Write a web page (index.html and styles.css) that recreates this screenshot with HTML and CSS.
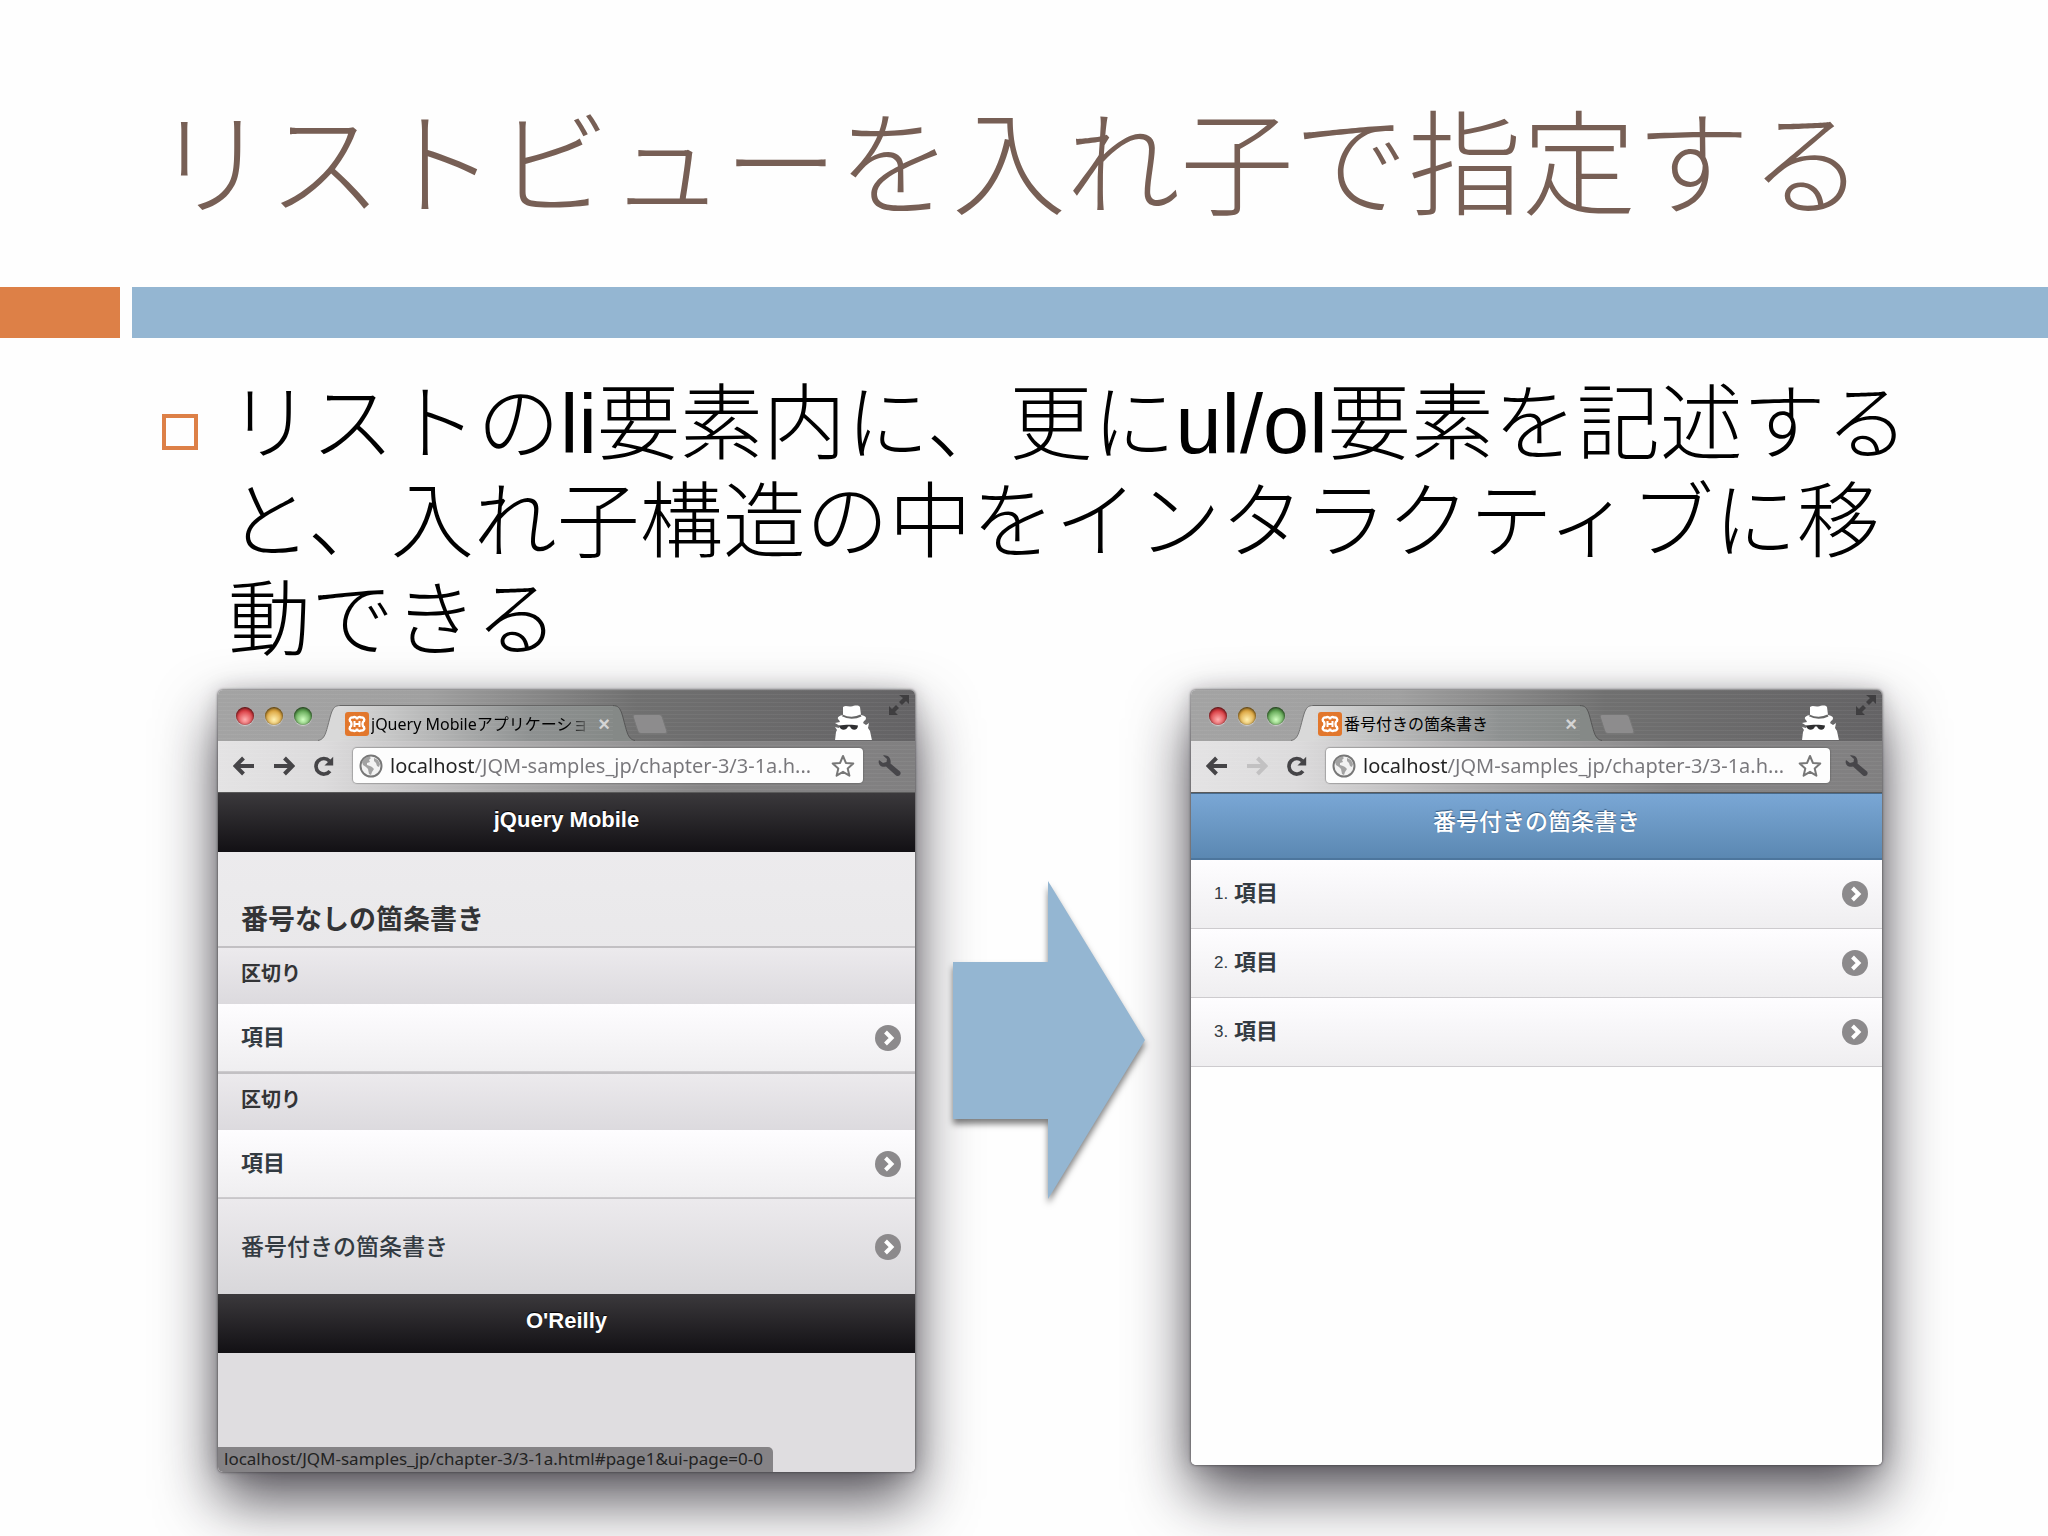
FILE: index.html
```html
<!DOCTYPE html>
<html lang="ja">
<head>
<meta charset="utf-8">
<meta name="viewport" content="width=device-width, initial-scale=1">
<title>リストビューを入れ子で指定する</title>
<link rel="stylesheet" href="styles.css">
</head>
<body>
<svg class="sprite" aria-hidden="true">
  <symbol id="chevron" viewBox="0 0 26 26"><circle cx="13" cy="13" r="13" fill="#8c8a8c"/><path d="M10.500 7l6 6-6 6" fill="none" stroke="#fff" stroke-width="4"/></symbol>
  <symbol id="arrow" viewBox="0 0 22 20"><path d="M2 10h19M10.500 2L2.500 10l8 8" fill="none" stroke="currentColor" stroke-width="4"/></symbol>
  <symbol id="reload" viewBox="0 0 24 24"><path d="M18.500 17.500A8.500 8.500 0 1 1 18 6.500" fill="none" stroke="currentColor" stroke-width="4"/><path d="M22 2v9.500h-9.500z" fill="currentColor"/></symbol>
  <symbol id="globe" viewBox="0 0 24 24"><circle cx="12" cy="12" r="10.500" fill="#f2f2f2" stroke="#777" stroke-width="2"/><path d="M3 8c1-3 4-5 7-5.500l2 1.500-2 2 1 2-3 1v2l3 1 2 1 2 2-2 3-1 3-2-1-1-5-2-2-3-2zM15 4l4 2 2 4-1 3-2-1-1-3-2-2z" fill="#a2a2a2"/></symbol>
  <symbol id="star" viewBox="0 0 24 24"><path d="M12 2l2.900 6.900 7.400.6-5.600 4.900 1.700 7.300L12 17.800l-6.400 3.900 1.700-7.300L1.700 9.500l7.400-.6z" fill="#fff" stroke="#777" stroke-width="2" stroke-linejoin="round"/></symbol>
  <symbol id="wrench" viewBox="0 0 26 24"><path d="M6 1.500l4 3.500-.5 3-3.500 1L2 6C.5 10 4 14 9 12.500l10 9c3 2 6-1.500 4-4l-9.500-8C14.500 4.500 11 .5 6 1.500z" fill="#47464a"/></symbol>
  <symbol id="favicon" viewBox="0 0 24 24"><rect width="24" height="24" rx="3" fill="#e2772c"/><path d="M8 5.500a2.500 2.500 0 0 1 4 2 2.500 2.500 0 0 1 4-2 2.500 2.500 0 0 1 3 3.500c-2 1-2 5 0 6a2.500 2.500 0 0 1-3 3.500 2.500 2.500 0 0 1-4-2 2.500 2.500 0 0 1-4 2A2.500 2.500 0 0 1 5 15c2-1 2-5 0-6a2.500 2.500 0 0 1 3-3.500z" fill="none" stroke="#fff" stroke-width="2.400"/><path d="M9.500 12h5M9.500 9v6M14.500 9v6" stroke="#fff" stroke-width="2"/></symbol>
  <symbol id="spy" viewBox="0 0 38 35"><path d="M9 2c3-2 5 0 8-.5S24-.5 26 2l1 8c3 .5 5 1.500 5 3s-1 2.500-2 3l-1 2 3 2 3-2-1 5 2 3 2 9.500H1L2 27l1-2-2-3 4 1 1-2-5-3 5-1-1-2c-2-1-2-4 4-5z" fill="#fff"/><path d="M8.500 10.500c5 3 13 3 18.500 0" fill="none" stroke="#666" stroke-width="2"/><path d="M5 20.500c6-1 15-1 19 0 0 5-6 6-8 1h-2c-2 5-8 4-9-1z" fill="#2f2f31"/></symbol>
  <symbol id="expand" viewBox="0 0 22 22"><path d="M11 1h10v9l-3-3-4 4-3-3 4-4zM1 12l3 3 4-4 3 3-4 4 3 3H1z" fill="#3f3e40"/></symbol>
  <symbol id="cap-left" viewBox="0 0 22 36"><path d="M0 36C8 34 8 26 13 9 15 3 17 .5 22 .5V36z" fill="#d9d9d9"/><path d="M0 35.500C8 34 8 26 13 9 15 3 17 .5 22 .5" fill="none" stroke="#747474"/></symbol>
  <symbol id="cap-right" viewBox="0 0 22 36"><path d="M22 36C14 34 14 26 9 9 7 3 5 .5 0 .5V36z" fill="#858987"/><path d="M22 35.500C14 34 14 26 9 9 7 3 5 .5 0 .5" fill="none" stroke="#555"/></symbol>
</svg>

<header class="slide-header"><h1>リストビューを入れ子で指定する</h1></header>
<div class="rule"><span class="rule-accent"></span><span class="rule-main"></span></div>

<main>
  <ul class="points">
    <li><p>リストのli要素内に、更にul/ol要素を記述すると、入れ子構造の中をインタラクティブに移動できる</p></li>
  </ul>

  <div class="stage">
    <section class="window" aria-label="jQuery Mobile">
      <div class="titlebar">
        <div class="lights"><button class="light red" aria-label="閉じる"></button><button class="light amber" aria-label="しまう"></button><button class="light green" aria-label="拡大"></button></div>
        <div class="tab">
          <svg class="cap"><use href="#cap-left"/></svg>
          <div class="tab-body"><svg class="favicon"><use href="#favicon"/></svg><span class="tab-title faded">jQuery Mobileアプリケーショ</span><button class="tab-close" aria-label="タブを閉じる">×</button></div>
          <svg class="cap"><use href="#cap-right"/></svg>
        </div>
        <div class="window-tools"><button class="new-tab" aria-label="新しいタブ"></button><svg class="spy"><use href="#spy"/></svg><button class="expand" aria-label="全画面"><svg><use href="#expand"/></svg></button></div>
      </div>
      <div class="toolbar">
        <button class="nav" aria-label="戻る"><svg><use href="#arrow"/></svg></button>
        <button class="nav forward" aria-label="進む"><svg><use href="#arrow"/></svg></button>
        <button class="nav" aria-label="再読み込み"><svg><use href="#reload"/></svg></button>
        <div class="address"><svg><use href="#globe"/></svg><input type="text" aria-label="アドレス" value="localhost/JQM-samples_jp/chapter-3/3-1a.h..."><svg><use href="#star"/></svg></div>
        <button class="menu" aria-label="設定"><svg><use href="#wrench"/></svg></button>
      </div>
      <div class="page grey">
        <div class="bar black">jQuery Mobile</div>
        <h2>番号なしの箇条書き</h2>
        <ul class="listview">
          <li class="divider">区切り</li>
          <li><a href="#item1">項目<svg><use href="#chevron"/></svg></a></li>
          <li class="divider">区切り</li>
          <li><a href="#item2">項目<svg><use href="#chevron"/></svg></a></li>
          <li><a class="nested" href="#numbered">番号付きの箇条書き<svg><use href="#chevron"/></svg></a></li>
        </ul>
        <div class="bar black">O'Reilly</div>
        <div class="status"><span>localhost/JQM-samples_jp/chapter-3/3-1a.html#page1&amp;ui-page=0-0</span></div>
      </div>
    </section>

    <svg class="arrow" viewBox="0 0 192 318" role="img" aria-label="次へ"><path d="M0 81h95V0l97 159-97 159v-80H0z" fill="#94b6d2"/></svg>

    <section class="window" id="numbered" aria-label="番号付きの箇条書き">
      <div class="titlebar">
        <div class="lights"><button class="light red" aria-label="閉じる"></button><button class="light amber" aria-label="しまう"></button><button class="light green" aria-label="拡大"></button></div>
        <div class="tab">
          <svg class="cap"><use href="#cap-left"/></svg>
          <div class="tab-body"><svg class="favicon"><use href="#favicon"/></svg><span class="tab-title">番号付きの箇条書き</span><button class="tab-close" aria-label="タブを閉じる">×</button></div>
          <svg class="cap"><use href="#cap-right"/></svg>
        </div>
        <div class="window-tools"><button class="new-tab" aria-label="新しいタブ"></button><svg class="spy"><use href="#spy"/></svg><button class="expand" aria-label="全画面"><svg><use href="#expand"/></svg></button></div>
      </div>
      <div class="toolbar">
        <button class="nav" aria-label="戻る"><svg><use href="#arrow"/></svg></button>
        <button class="nav forward" aria-label="進む" disabled><svg><use href="#arrow"/></svg></button>
        <button class="nav" aria-label="再読み込み"><svg><use href="#reload"/></svg></button>
        <div class="address"><svg><use href="#globe"/></svg><input type="text" aria-label="アドレス" value="localhost/JQM-samples_jp/chapter-3/3-1a.h..."><svg><use href="#star"/></svg></div>
        <button class="menu" aria-label="設定"><svg><use href="#wrench"/></svg></button>
      </div>
      <div class="page">
        <div class="bar blue">番号付きの箇条書き</div>
        <ol class="listview">
          <li><a href="#n1"><span class="num">1.</span>項目<svg><use href="#chevron"/></svg></a></li>
          <li><a href="#n2"><span class="num">2.</span>項目<svg><use href="#chevron"/></svg></a></li>
          <li><a href="#n3"><span class="num">3.</span>項目<svg><use href="#chevron"/></svg></a></li>
        </ol>
      </div>
    </section>
  </div>
</main>
</body>
</html>
```
FILE: styles.css
```css
*, *::before { box-sizing: border-box; }

body {
  margin: 0;
  min-height: 100vh;
  overflow: hidden;
  background: #fefefe;
  color: #000;
  font-family: "Liberation Sans", "Noto Sans CJK JP", sans-serif;
}

h1, h2, p, ul, ol { margin: 0; padding: 0; font-weight: inherit; }
ul, ol { list-style: none; }
a { color: inherit; text-decoration: none; }
svg { display: block; flex: none; }
button { padding: 0; border: 0; background: none; font: inherit; color: inherit; flex: none; }
.sprite { position: absolute; width: 0; height: 0; }

.slide-header { padding: 109px 154px 62px; }
.slide-header h1 {
  color: #775f55;
  font-size: 114px;
  font-weight: 300;
  line-height: 116px;
  white-space: nowrap;
}

.rule { display: flex; gap: 12px; height: 51px; }
.rule-accent { width: 120px; background: #dd8047; }
.rule-main { flex: 1; background: #94b6d2; }

.points { padding: 38px 116px 0 162px; }
.points li {
  display: flex;
  gap: 30px;
  font-size: 83px;
  font-weight: 300;
  line-height: 98px;
}
.points li::before {
  content: "";
  flex: none;
  width: 36px;
  height: 36px;
  margin-top: 38px;
  border: 4px solid #dd8047;
}

.stage {
  display: grid;
  grid-template-columns: minmax(0, 697fr) minmax(0, 276fr) minmax(0, 691fr);
  align-items: start;
  padding: 20px 166px 64px 218px;
}
.arrow {
  width: 192px;
  height: 318px;
  margin: 191px auto 0 38px;
  overflow: visible;
  filter: drop-shadow(0 5px 3px rgba(0, 0, 0, .5));
}

/* Browser window */
.window {
  border-radius: 5px;
  box-shadow: 0 0 2px 1px rgba(60, 58, 62, .5), 0 0 20px rgba(20, 15, 25, .2), 0 28px 60px rgba(20, 15, 25, .72);
}
.titlebar {
  display: flex;
  align-items: flex-end;
  height: 51px;
  padding-left: 18px;
  border-radius: 5px 5px 0 0;
  background:
    repeating-linear-gradient(rgba(255, 255, 255, .05) 0 1px, transparent 1px 4px),
    linear-gradient(90deg, #a3a3a3, #a0a0a0 30%, #707070 60%, #646365);
}
.lights { display: flex; gap: 11px; margin: 0 6px 16px 0; }
.light {
  width: 18px;
  height: 18px;
  border-radius: 50%;
  box-shadow: inset 0 1px 3px rgba(0, 0, 0, .8), 0 1px 1px rgba(255, 255, 255, .5);
}
.red { background: radial-gradient(circle at 50% 70%, #ffb0b0, #d93a40 60%); }
.amber { background: radial-gradient(circle at 50% 70%, #fff0b0, #dba33c 60%); }
.green { background: radial-gradient(circle at 50% 70%, #d0ffc0, #5fa552 60%); }

.tab { display: flex; flex: 1; min-width: 0; height: 36px; }
.cap { width: 22px; height: 36px; }
.tab-body {
  display: flex;
  align-items: center;
  flex: 1;
  min-width: 0;
  padding-left: 5px;
  border-top: 1px solid #666;
  background:
    repeating-linear-gradient(rgba(255, 255, 255, .05) 0 1px, transparent 1px 4px),
    linear-gradient(90deg, #d9d9d9, #b4b5b5 35%, #8e9191 70%, #858987);
}
.favicon { width: 24px; height: 24px; }
.tab-title {
  flex: 1;
  min-width: 0;
  margin-left: 2px;
  font: 16px/24px "Noto Sans", "Noto Sans CJK JP", sans-serif;
  white-space: nowrap;
}
.faded { -webkit-mask-image: linear-gradient(90deg, #000 88%, transparent); mask-image: linear-gradient(90deg, #000 88%, transparent); }
.tab-close { width: 12px; margin: 0 3px 0 4px; color: #d4d4d4; font-size: 20px; font-weight: 700; line-height: 24px; }

.window-tools { display: flex; align-items: flex-end; width: 280px; height: 51px; padding-right: 5px; }
.new-tab {
  width: 30px;
  height: 20px;
  margin: 0 0 7px;
  border: 1px solid #777;
  border-radius: 3px;
  background: #8d8c8d;
  transform: skewX(18deg);
}
.spy { width: 38px; height: 35px; margin: 0 16px 1px auto; }
.expand { align-self: flex-start; margin-top: 4px; }
.expand svg { width: 22px; height: 22px; }

.toolbar {
  display: flex;
  align-items: center;
  height: 52px;
  padding: 0 12px 2px 15px;
  border-bottom: 1px solid #5a5a5a;
  background:
    repeating-linear-gradient(rgba(255, 255, 255, .05) 0 1px, transparent 1px 4px),
    linear-gradient(90deg, #e4e3e4, #dcdbdc 15%, #b0afb0 40%, #868586 70%, #807f80);
}
.nav { width: 22px; margin-right: 18px; color: #454447; }
.nav svg { width: 22px; height: 22px; }
.forward svg { transform: scaleX(-1); }
.nav:disabled { color: #c2c1c2; }
.address {
  display: flex;
  align-items: center;
  flex: 1;
  min-width: 0;
  height: 35px;
  padding: 0 8px 0 6px;
  border-radius: 4px;
  background: #fdfdfd;
  box-shadow: 0 0 1px 1px rgba(90, 90, 90, .4);
}
.address svg { width: 24px; height: 24px; }
.address input {
  flex: 1;
  min-width: 0;
  height: 28px;
  padding: 0 0 0 7px;
  border: 0;
  outline: 0;
  background: linear-gradient(90deg, #222 92px, #77767a 92px);
  -webkit-background-clip: text;
  background-clip: text;
  color: transparent;
  font: 20px/28px "Noto Sans", sans-serif;
}
.menu { margin-left: 14px; }
.menu svg { width: 26px; height: 24px; }

/* Page inside the window */
.page {
  display: flex;
  flex-direction: column;
  min-height: 672px;
  overflow: hidden;
  border-radius: 0 0 5px 5px;
  background: #fefefe;
  color: #333436;
}
.page.grey { min-height: 679px; background: linear-gradient(#eeecee, #ebeaec 14%, #dfdde0 80%); }
.bar {
  height: 59px;
  padding-bottom: 5px;
  color: #fff;
  font-size: 22px;
  font-weight: 700;
  line-height: 54px;
  text-align: center;
}
.black { background: linear-gradient(#3b393c, #121014); text-shadow: 0 -1px 1px #000; }
.blue {
  height: 67px;
  border-top: 1px solid #486b8d;
  border-bottom: 2px solid #4d769d;
  background: linear-gradient(#7aa7d5, #5b88b2);
  font-size: 23px;
  font-weight: 500;
  line-height: 56px;
  text-shadow: 0 -1px 1px #36587c;
}
.page h2 { padding: 50px 23px 8px; font-size: 27px; font-weight: 700; line-height: 36px; }
.divider {
  height: 58px;
  padding: 0 23px;
  border-top: 2px solid #c2c0c3;
  background: linear-gradient(#eceaed, #dcdade);
  font-size: 20px;
  font-weight: 700;
  line-height: 52px;
}
.listview a {
  display: flex;
  align-items: center;
  height: 68px;
  padding: 0 14px 0 23px;
  border-bottom: 1px solid #cdcbce;
  background: linear-gradient(#fefdff, #efeef0);
  color: #333b42;
  font-size: 22px;
  font-weight: 700;
  line-height: 32px;
}
.listview a svg { width: 26px; height: 26px; margin-left: auto; }
ol.listview a { height: 69px; }
.listview a.nested {
  height: 96px;
  border-top: 1px solid #c8c6c9;
  border-bottom: 0;
  background: linear-gradient(#eceaed, #d8d7da);
  font-size: 23px;
  font-weight: 500;
}
.num { width: 20px; font-size: 17px; font-weight: 400; }
.status { display: flex; margin-top: auto; }
.status span {
  height: 25px;
  padding: 0 10px 0 6px;
  border-radius: 0 5px 0 0;
  background: #858386;
  color: #222;
  font: 17px/24px "Noto Sans", sans-serif;
}
```
